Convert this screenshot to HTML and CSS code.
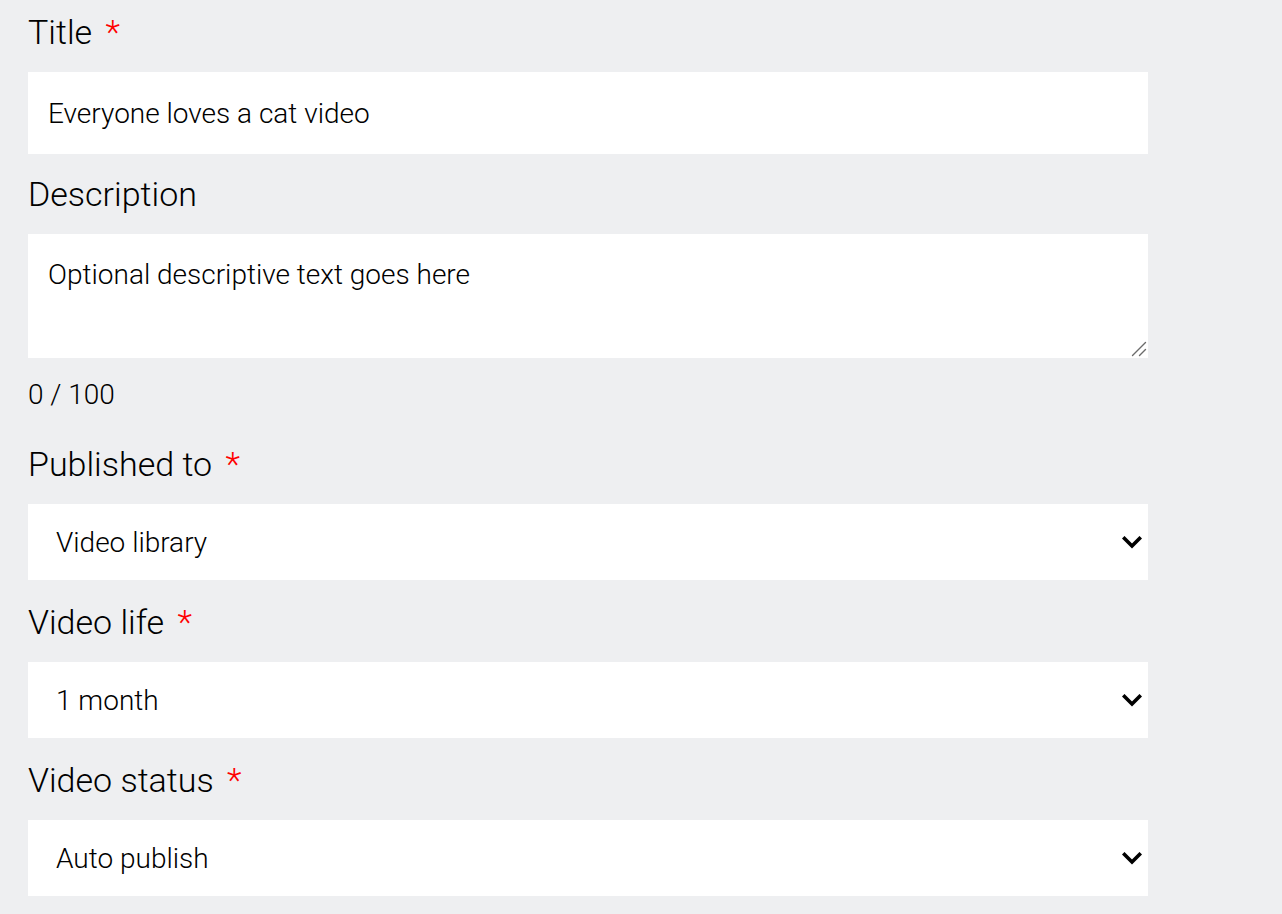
FILE: index.html
```html
<!DOCTYPE html>
<html lang="en">
<head>
<meta charset="utf-8">
<title>Video form</title>
<link rel="stylesheet" href="styles.css">
</head>
<body>
<form class="form">
  <div class="field">
    <label class="label" for="title">Title <span class="req">*</span></label>
    <input class="control input" id="title" type="text" value="Everyone loves a cat video">
  </div>
  <div class="field field-desc">
    <label class="label" for="desc">Description</label>
    <div class="textarea-wrap">
      <textarea class="control textarea" id="desc">Optional descriptive text goes here</textarea>
      <svg class="grip" width="16" height="16" viewBox="0 0 16 16" aria-hidden="true"><line x1="1.5" y1="14.5" x2="14.5" y2="1.5" stroke="#6b6b6b" stroke-width="1.4" stroke-linecap="round"/><line x1="8.5" y1="14.5" x2="14.5" y2="8.5" stroke="#6b6b6b" stroke-width="1.4" stroke-linecap="round"/></svg>
    </div>
    <div class="counter">0 / 100</div>
  </div>
  <div class="field">
    <label class="label" for="pub">Published to <span class="req">*</span></label>
    <div class="select-wrap">
      <select class="control select" id="pub"><option>Video library</option></select>
      <svg class="chevron" width="20" height="14" viewBox="0 0 20 14" aria-hidden="true"><polyline points="2.5,2.5 10,10 17.5,2.5" fill="none" stroke="#000" stroke-width="3.6" stroke-linecap="square"/></svg>
    </div>
  </div>
  <div class="field">
    <label class="label" for="life">Video life <span class="req">*</span></label>
    <div class="select-wrap">
      <select class="control select" id="life"><option>1 month</option></select>
      <svg class="chevron" width="20" height="14" viewBox="0 0 20 14" aria-hidden="true"><polyline points="2.5,2.5 10,10 17.5,2.5" fill="none" stroke="#000" stroke-width="3.6" stroke-linecap="square"/></svg>
    </div>
  </div>
  <div class="field">
    <label class="label" for="status">Video status <span class="req">*</span></label>
    <div class="select-wrap">
      <select class="control select" id="status"><option>Auto publish</option></select>
      <svg class="chevron" width="20" height="14" viewBox="0 0 20 14" aria-hidden="true"><polyline points="2.5,2.5 10,10 17.5,2.5" fill="none" stroke="#000" stroke-width="3.6" stroke-linecap="square"/></svg>
    </div>
  </div>
</form>
</body>
</html>
```
FILE: styles.css
```css
html, body {
  margin: 0;
  background: #eeeff1;
}
body {
  font-family: Roboto, "Liberation Sans", sans-serif;
  font-weight: 300;
  color: #000;
  height: 914px;
  overflow: hidden;
}
.form {
  width: 1120px;
  padding: 12px 0 0 28px;
  display: flex;
  flex-direction: column;
  gap: 22px;
}
.field {
  display: flex;
  flex-direction: column;
}
.field-desc {
  margin-top: -2px;
}
.label {
  font-size: 34px;
  line-height: 40px;
  margin-bottom: 20px;
}
.req {
  color: #ff0000;
  margin-left: 5px;
}
.control {
  box-sizing: border-box;
  width: 1120px;
  border: none;
  border-radius: 0;
  background: #fff;
  font-family: Roboto, "Liberation Sans", sans-serif;
  font-weight: 300;
  font-size: 28px;
  color: #000;
  margin: 0;
  outline: none;
}
.input {
  height: 82px;
  padding: 0 20px;
}
.textarea-wrap {
  position: relative;
  width: 1120px;
}
.textarea {
  height: 124px;
  padding: 24px 20px;
  line-height: 33px;
  resize: none;
  display: block;
}
.grip {
  position: absolute;
  right: 1px;
  bottom: 1px;
  pointer-events: none;
}
.counter {
  font-size: 28px;
  line-height: 32px;
  margin-top: 21px;
  margin-bottom: 11px;
}
.select-wrap {
  position: relative;
  width: 1120px;
}
.select {
  height: 76px;
  padding: 0 60px 0 28px;
  appearance: none;
  -webkit-appearance: none;
  display: block;
}
.chevron {
  position: absolute;
  right: 6px;
  top: 32px;
  pointer-events: none;
}
```
